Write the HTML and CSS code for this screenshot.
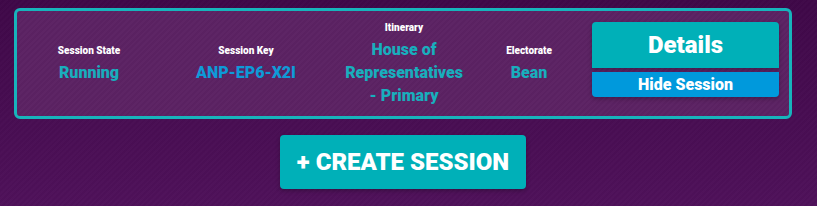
FILE: index.html
```html
<!DOCTYPE html>
<html lang="en">
<head>
    <meta charset="UTF-8">
    <meta name="viewport" content="width=device-width, initial-scale=1.0">
    <title>Sessions</title>
    <link rel="stylesheet" href="styles.css">
</head>
<body>
    <div class="page">
        <div class="session-card">
            <div class="field field-state">
                <div class="field-label">Session State</div>
                <div class="field-value">Running</div>
            </div>
            <div class="field field-key">
                <div class="field-label">Session Key</div>
                <div class="field-value key">ANP-EP6-X2I</div>
            </div>
            <div class="field field-itinerary">
                <div class="field-label">Itinerary</div>
                <div class="field-value">House of Representatives - Primary</div>
            </div>
            <div class="field field-electorate">
                <div class="field-label">Electorate</div>
                <div class="field-value">Bean</div>
            </div>
            <div class="actions">
                <button class="btn-details">Details</button>
                <button class="btn-hide">Hide Session</button>
            </div>
        </div>
        <div class="create-row">
            <button class="btn-create">+ CREATE SESSION</button>
        </div>
    </div>
</body>
</html>
```

FILE: styles.css
```css
html, body {
    height: 100%;
}
body {
    margin: 0;
    font-family: 'Roboto', 'Liberation Sans', sans-serif;
    font-weight: 900;
    background-color: #450c4e;
    background-image:
        repeating-linear-gradient(135deg, rgba(255, 255, 255, 0.01) 0 2px, rgba(0, 0, 0, 0.01) 2px 4px),
        linear-gradient(to bottom, #3f0848, #4f115a);
}
.page {
    padding: 8px 25px 0 14px;
}
.session-card {
    display: flex;
    align-items: center;
    height: 105px;
    border: 3px solid #17b4bc;
    border-radius: 6px;
    background-color: #5b2263;
    background-image: repeating-linear-gradient(135deg, rgba(255, 255, 255, 0.015) 0 2px, rgba(0, 0, 0, 0.015) 2px 4px);
}
.field {
    text-align: center;
}
.field-state { width: 144px; }
.field-key { width: 170px; }
.field-itinerary { width: 146px; }
.field-electorate { width: 104px; }
.field-itinerary .field-value {
    width: 120px;
    margin: 0 auto;
}
.field-label {
    color: #fff;
    font-size: 10px;
    line-height: 14px;
    margin-bottom: 3px;
}
.field-value {
    color: #18aebd;
    font-size: 16px;
    line-height: 23px;
}
.field-value.key {
    color: #0e9ad8;
}
.actions {
    display: flex;
    flex-direction: column;
    gap: 4px;
    width: 187px;
    margin-left: 11px;
    margin-bottom: 8px;
}
.actions button {
    border: none;
    font-family: inherit;
    font-weight: 900;
    color: #fff;
    cursor: pointer;
    box-shadow: 0 2px 4px rgba(0, 0, 0, 0.25);
}
.btn-details {
    height: 46px;
    background-color: #00b0b8;
    border-radius: 4px 4px 0 0;
    font-size: 24px;
}
.btn-hide {
    height: 25px;
    background-color: #0099dc;
    border-radius: 0 0 4px 4px;
    font-size: 16px;
}
.create-row {
    display: flex;
    justify-content: center;
    margin-top: 16px;
}
.btn-create {
    width: 246px;
    height: 54px;
    border: none;
    border-radius: 4px;
    background-color: #00b0b8;
    color: #fff;
    font-family: inherit;
    font-weight: 900;
    font-size: 24px;
    cursor: pointer;
    box-shadow: 0 2px 4px rgba(0, 0, 0, 0.25);
}
```
